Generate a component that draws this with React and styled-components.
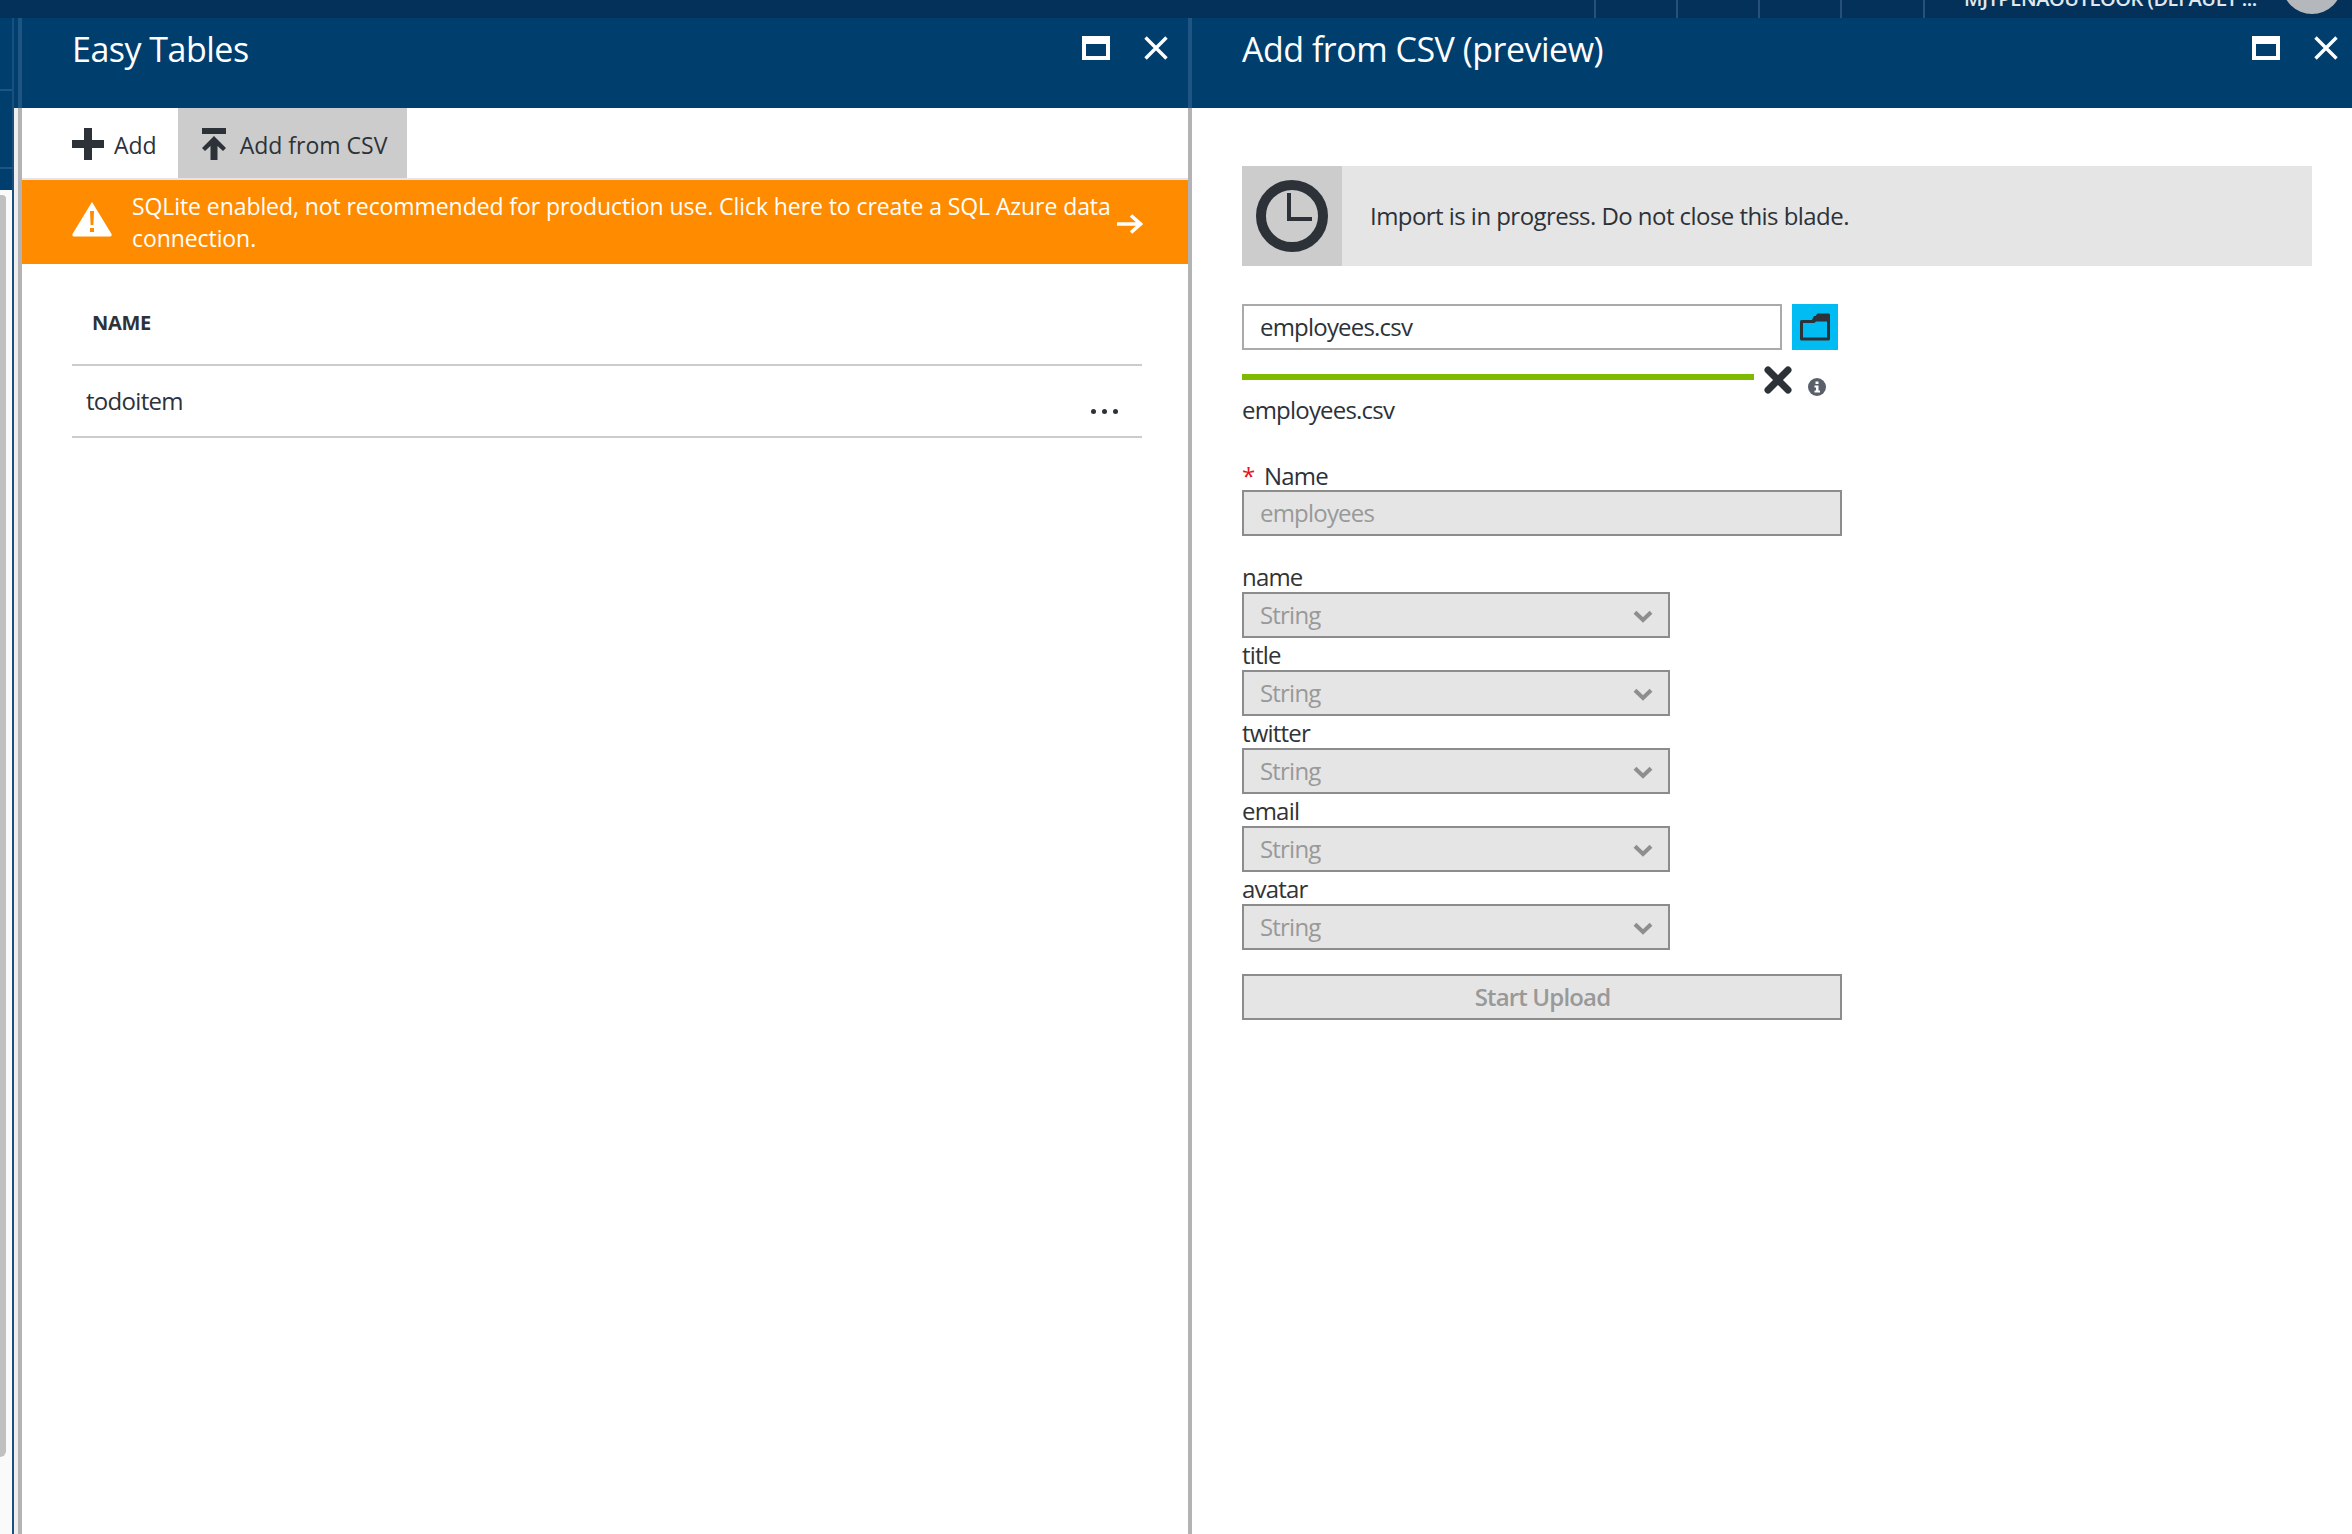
import React from 'react';
import styled, { createGlobalStyle } from 'styled-components';

const GlobalStyle = createGlobalStyle`
  html, body { margin: 0; padding: 0; background: #fff; }
  body { font-family: "Open Sans", "Noto Sans", sans-serif; color: #2d3239; }
  * { box-sizing: border-box; }
`;

const Page = styled.div`
  width: 2352px;
  height: 1534px;
  display: flex;
  flex-direction: column;
  overflow: hidden;
`;

const TopBar = styled.div`
  height: 18px;
  flex: none;
  background: #03315a;
  display: flex;
  justify-content: flex-end;
  align-items: flex-end;
  overflow: hidden;
`;

const TopCell = styled.div`
  width: ${(p) => p.$w || 82}px;
  height: 18px;
  flex: none;
  border-left: 2px solid #27517a;
`;

const UserName = styled.div`
  flex: none;
  width: 318px;
  height: 30px;
  margin-bottom: 4px;
  line-height: 30px;
  font-size: 20px;
  font-weight: 600;
  letter-spacing: -0.45px;
  color: #e2e7ec;
  white-space: nowrap;
`;

const Avatar = styled.div`
  flex: none;
  width: 60px;
  height: 60px;
  margin: 0 10px 4px 0;
  border-radius: 50%;
  background: #b4b8bc;
`;

const Workspace = styled.div`
  flex: 1;
  display: flex;
  min-height: 0;
`;

const Rail = styled.div`
  width: 12px;
  flex: none;
  display: flex;
  flex-direction: column;
  background: #fafafa;
`;

const RailTop = styled.div`
  height: 172px;
  flex: none;
  background: #003e6e;
  border-bottom: 0;
  background-image: linear-gradient(#003e6e 71px, #1f5582 71px, #1f5582 73px, #003e6e 73px, #003e6e 149px, #1f5582 149px, #1f5582 151px, #003e6e 151px);
`;

const RailScroll = styled.div`
  width: 6px;
  height: 1262px;
  margin-top: 5px;
  background: #c0c0c0;
  border-radius: 0 4px 6px 0;
`;

const Stripe = styled.div`
  width: 2px;
  flex: none;
  background: #1b4f7e;
`;

const Gutter = styled.div`
  width: 4px;
  flex: none;
  background: linear-gradient(#003e6e 90px, #eeeeee 90px);
`;

const Blade = styled.section`
  flex: none;
  width: ${(p) => p.$w}px;
  display: flex;
  flex-direction: column;
`;

const BladeHeader = styled.header`
  height: 90px;
  flex: none;
  display: flex;
  align-items: flex-start;
  background: #003e6e;
  border-left: 4px solid #1f5582;
  padding-left: ${(p) => p.$pad}px;
  color: #fff;
`;

const BladeTitle = styled.h1`
  flex: 1;
  margin: 0;
  font-size: 34px;
  line-height: 42px;
  padding-top: 10px;
  font-weight: 400;
  letter-spacing: -0.5px;
`;

const HeaderIcons = styled.div`
  display: flex;
  align-items: center;
  height: 24px;
  margin-top: 18px;
  margin-right: ${(p) => p.$right}px;
  gap: 34px;
`;

const BladeBody = styled.div`
  flex: 1;
  border-left: 4px solid #b3b3b3;
  background: #fff;
  min-height: 0;
`;

const Toolbar = styled.div`
  height: 72px;
  display: flex;
  padding-left: 50px;
  border-bottom: 2px solid #e5e5e5;
`;

const ToolButton = styled.div`
  display: flex;
  align-items: flex-start;
  height: 70px;
  padding: 20px ${(p) => (p.$active ? 20 : 21)}px 0 ${(p) => (p.$active ? 24 : 0)}px;
  gap: ${(p) => (p.$active ? 14 : 10)}px;
  background: ${(p) => (p.$active ? '#cccccc' : 'transparent')};
  font-size: 23px;
  line-height: 34px;
  letter-spacing: 0;
  color: #2d3239;
`;

const WarningBar = styled.div`
  height: 84px;
  display: flex;
  background: #ff8c00;
  color: #fff;
  padding-left: 50px;
  font-size: 23px;
  line-height: 32px;
  letter-spacing: -0.08px;
`;

const WarningIcon = styled.svg`
  width: 40px;
  height: 36px;
  flex: none;
  margin-top: 21px;
`;

const WarningText = styled.div`
  width: 985px;
  margin-left: 20px;
  padding-top: 10px;
`;

const WarningArrow = styled.svg`
  width: 26px;
  height: 20px;
  flex: none;
  margin: 34px 0 0 0;
`;

const Table = styled.div`
  padding: 0 46px 0 50px;
`;

const HeadRow = styled.div`
  height: 102px;
  padding: 45px 0 0 20px;
  border-bottom: 2px solid #cccccc;
  font-size: 20px;
  line-height: 28px;
  font-weight: 700;
  letter-spacing: -0.3px;
`;

const DataRow = styled.div`
  height: 72px;
  display: flex;
  justify-content: space-between;
  padding: 18px 24px 0 14px;
  border-bottom: 2px solid #cccccc;
  font-size: 24px;
  line-height: 34px;
  letter-spacing: -0.7px;
`;

const Dots = styled.div`
  display: flex;
  gap: 6px;
  margin-top: 25px;
  i {
    width: 5px;
    height: 5px;
    border-radius: 50%;
    background: #2d3239;
  }
`;

const Form = styled.div`
  padding: 58px 0 0 50px;
  font-size: 24px;
  line-height: 32px;
  letter-spacing: -0.8px;
`;

const Notice = styled.div`
  width: 1070px;
  height: 100px;
  display: flex;
  align-items: center;
  background: #e5e5e5;
`;

const NoticeIcon = styled.div`
  width: 100px;
  height: 100px;
  flex: none;
  display: flex;
  align-items: center;
  justify-content: center;
  background: #cccccc;
`;

const NoticeText = styled.div`
  margin-left: 28px;
  letter-spacing: -0.55px;
`;

const FileRow = styled.div`
  display: flex;
  gap: 10px;
  margin-top: 38px;
`;

const TextBox = styled.div`
  width: ${(p) => p.$w}px;
  height: 46px;
  flex: none;
  display: flex;
  align-items: center;
  justify-content: ${(p) => (p.$center ? 'center' : 'space-between')};
  padding: 0 15px 0 16px;
  border: 2px solid ${(p) => (p.$disabled ? '#8c8c8c' : '#aaaaaa')};
  background: ${(p) => (p.$disabled ? '#e5e5e5' : '#fff')};
  color: ${(p) => (p.$disabled ? '#999999' : '#2d3239')};
  font-weight: ${(p) => (p.$center ? 600 : 400)};
`;

const FolderButton = styled.div`
  width: 46px;
  height: 46px;
  display: flex;
  align-items: center;
  justify-content: center;
  background: #00bcf2;
`;

const ProgressRow = styled.div`
  height: 28px;
  display: flex;
  align-items: flex-start;
  margin-top: 16px;
`;

const ProgressBar = styled.div`
  width: 512px;
  height: 6px;
  margin-top: 8px;
  background: #7fba00;
`;

const CancelIcon = styled.svg`
  width: 28px;
  height: 28px;
  margin-left: 10px;
`;

const InfoIcon = styled.svg`
  width: 18px;
  height: 18px;
  margin: 12px 0 0 16px;
`;

const FileName = styled.div``;

const NameLabel = styled.label`
  display: flex;
  height: 32px;
  padding-top: 2px;
  margin-top: 32px;
  span {
    width: 22px;
    color: #e81123;
  }
`;

const FieldLabel = styled.label`
  display: block;
  height: 32px;
  padding-top: 1px;
  margin-top: ${(p) => (p.$first ? 24 : 0)}px;
  color: #333333;
`;

const ChevronIcon = styled.svg`
  width: 20px;
  height: 13px;
  margin-top: 2px;
`;

const SubmitBox = styled(TextBox)`
  margin-top: 24px;
  letter-spacing: -0.85px;
`;

const columns = ['name', 'title', 'twitter', 'email', 'avatar'];

const Maximize = () => (
  <svg width="28" height="24" viewBox="0 0 28 24">
    <rect x="2" y="4" width="24" height="18" fill="none" stroke="#fff" strokeWidth="4" />
    <rect x="0" y="0" width="28" height="8" fill="#fff" />
  </svg>
);

const Close = () => (
  <svg width="24" height="24" viewBox="0 0 24 24">
    <path d="M1.5 1.5 L22.5 22.5 M22.5 1.5 L1.5 22.5" stroke="#fff" strokeWidth="3.4" fill="none" />
  </svg>
);

const Chevron = () => (
  <ChevronIcon viewBox="0 0 20 13">
    <path d="M2 2.2 L10 10 L18 2.2" stroke="#8e8e8e" strokeWidth="4" fill="none" />
  </ChevronIcon>
);

const Header = ({ title, pad, right }) => (
  <BladeHeader $pad={pad}>
    <BladeTitle>{title}</BladeTitle>
    <HeaderIcons $right={right}>
      <Maximize />
      <Close />
    </HeaderIcons>
  </BladeHeader>
);

export default function App() {
  return (
    <Page>
      <GlobalStyle />
      <TopBar>
        <TopCell />
        <TopCell />
        <TopCell />
        <TopCell $w={83} />
        <TopCell $w={41} />
        <UserName>MJTPENAOUTLOOK (DEFAULT ...</UserName>
        <Avatar />
      </TopBar>
      <Workspace>
        <Rail>
          <RailTop />
          <RailScroll />
        </Rail>
        <Stripe />
        <Gutter />
        <Blade $w={1170}>
          <Header title="Easy Tables" pad={50} right={20} />
          <BladeBody>
            <Toolbar>
              <ToolButton>
                <svg width="32" height="32" viewBox="0 0 32 32">
                  <path d="M12 0h8v12h12v8H20v12h-8V20H0v-8h12z" fill="#2d3239" />
                </svg>
                <span>Add</span>
              </ToolButton>
              <ToolButton $active>
                <svg width="24" height="32" viewBox="0 0 24 32">
                  <path d="M0 0h24v6H0z M12 8 L24 20 L21 23 L15.5 18 V32 H8.5 V18 L3 23 L0 20 z" fill="#2d3239" />
                </svg>
                <span>Add from CSV</span>
              </ToolButton>
            </Toolbar>
            <WarningBar>
              <WarningIcon viewBox="0 0 40 36">
                <path d="M20 1 L39.5 33 Q40 35.5 38 35.5 H2 Q0 35.5 .5 33 z" fill="#fff" />
                <path d="M18 10h4l-.6 14h-2.800z M18 27h4v4h-4z" fill="#ff8c00" />
              </WarningIcon>
              <WarningText>SQLite enabled, not recommended for production use. Click here to create a SQL Azure data connection.</WarningText>
              <WarningArrow viewBox="0 0 26 20">
                <path d="M0 10 H23 M14 1.500 L23.500 10 L14 18.500" stroke="#fff" strokeWidth="3.6" fill="none" />
              </WarningArrow>
            </WarningBar>
            <Table>
              <HeadRow>NAME</HeadRow>
              <DataRow>
                <span>todoitem</span>
                <Dots><i /><i /><i /></Dots>
              </DataRow>
            </Table>
          </BladeBody>
        </Blade>
        <Blade $w={1164}>
          <Header title="Add from CSV (preview)" pad={50} right={14} />
          <BladeBody>
            <Form>
              <Notice>
                <NoticeIcon>
                  <svg width="72" height="72" viewBox="0 0 72 72">
                    <circle cx="36" cy="36" r="31" fill="none" stroke="#2d3239" strokeWidth="10" />
                    <path d="M33 15h4v24h21v4H33z" fill="#2d3239" transform="translate(-2 -2)" />
                  </svg>
                </NoticeIcon>
                <NoticeText>Import is in progress. Do not close this blade.</NoticeText>
              </Notice>
              <FileRow>
                <TextBox $w={540}>employees.csv</TextBox>
                <FolderButton>
                  <svg width="32" height="28" viewBox="0 0 32 28">
                    <path d="M2.500 8.500 H15 L19 2 H29.500 V26 H2.500 z" fill="none" stroke="#2d3239" strokeWidth="3" strokeLinejoin="round" />
                    <path d="M15 3 H29 V8.500 H12 z" fill="#2d3239" />
                  </svg>
                </FolderButton>
              </FileRow>
              <ProgressRow>
                <ProgressBar />
                <CancelIcon viewBox="0 0 28 28">
                  <path d="M4 4 L24 24 M24 4 L4 24" stroke="#2d3239" strokeWidth="7" strokeLinecap="round" fill="none" />
                </CancelIcon>
                <InfoIcon viewBox="0 0 18 18">
                  <circle cx="9" cy="9" r="9" fill="#596069" />
                  <path d="M7.500 3.500h3v2.500h-3z M6.500 7.500h4v5h1.500v2H6.500v-2H8v-3H6.500z" fill="#fff" />
                </InfoIcon>
              </ProgressRow>
              <FileName>employees.csv</FileName>
              <NameLabel><span>*</span>Name</NameLabel>
              <TextBox $w={600} $disabled>employees</TextBox>
              {columns.map((column, i) => (
                <React.Fragment key={column}>
                  <FieldLabel $first={i === 0}>{column}</FieldLabel>
                  <TextBox $w={428} $disabled>
                    String
                    <Chevron />
                  </TextBox>
                </React.Fragment>
              ))}
              <SubmitBox $w={600} $disabled $center>Start Upload</SubmitBox>
            </Form>
          </BladeBody>
        </Blade>
      </Workspace>
    </Page>
  );
}
